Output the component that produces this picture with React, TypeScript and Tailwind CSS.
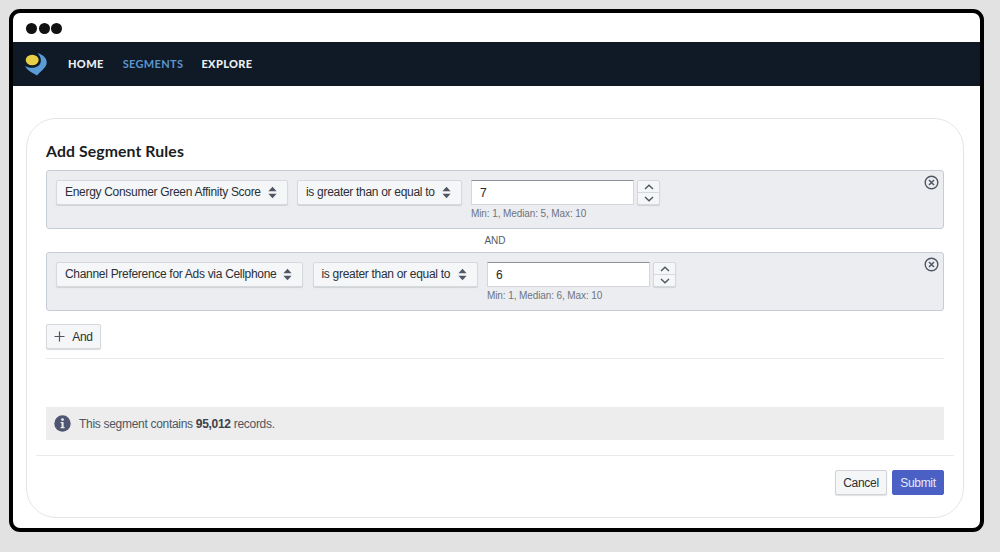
import React from "react";

const sans = "font-['Liberation_Sans',Arial,sans-serif]";
const body = "text-[12px] tracking-[-0.3px]";

function Updown() {
  return (
    <svg width="9" height="13" viewBox="0 0 9 13" className="shrink-0">
      <path d="M4.5 0.8 L8.6 5.2 H0.4 Z" fill="#4f5663" />
      <path d="M4.5 12.2 L8.6 7.8 H0.4 Z" fill="#4f5663" />
    </svg>
  );
}

function Select({ label, w }: { label: string; w: string }) {
  return (
    <div className={`${w} h-[25px] shrink-0 flex items-center justify-between pl-2 pr-[10px] bg-[#f5f6f8] border border-[#d5d8dd] rounded-[2px] shadow-[0_1px_1px_rgba(0,0,0,0.12)] ${body} text-[#2b2f36] whitespace-nowrap`}>
      <span className="-translate-y-px">{label}</span>
      <Updown />
    </div>
  );
}

function Rule({ a, aw, value, hint, gap }: { a: string; aw: string; value: string; hint: string; gap: string }) {
  return (
    <div className="relative h-[59px] border border-[#c6ccd6] rounded-[3px] bg-[#ecedf0] pl-[9px] pt-[9px] flex items-start">
      <Select label={a} w={aw} />
      <div className={`${gap} shrink-0`} />
      <Select label="is greater than or equal to" w="w-[165px]" />
      <div className={`${gap} shrink-0`} />
      <div className="flex flex-col">
        <div className="flex">
          <div className="w-[163px] h-[25px] bg-white border border-[#d3d6da] border-t-[#8d9299] rounded-[1px] pl-2 flex items-center text-[12px] text-[#22262c]">{value}</div>
          <div className="ml-[3px] w-[23px] h-[25px] bg-[#f5f6f8] border border-[#d5d8dd] rounded-[2px] shadow-[0_1px_1px_rgba(0,0,0,0.12)] flex flex-col">
            <div className="h-[12px] flex items-center justify-center border-b border-[#d5d8dd]">
              <svg width="10" height="6" viewBox="0 0 10 6" fill="none"><path d="M1 5 L5 1.2 L9 5" stroke="#4f5663" strokeWidth="1.4" /></svg>
            </div>
            <div className="flex-1 flex items-center justify-center">
              <svg width="10" height="6" viewBox="0 0 10 6" fill="none"><path d="M1 1 L5 4.8 L9 1" stroke="#4f5663" strokeWidth="1.4" /></svg>
            </div>
          </div>
        </div>
        <div className="mt-[3px] text-[10px] tracking-[-0.1px] leading-[12px] text-[#6d7480] whitespace-nowrap">{hint}</div>
      </div>
      <svg width="15" height="15" viewBox="0 0 15 15" fill="none" className="absolute right-[4.5px] top-[4px]">
        <circle cx="7.5" cy="7.5" r="6.3" stroke="#4f5663" strokeWidth="1.4" />
        <path d="M5 5 L10 10 M10 5 L5 10" stroke="#4f5663" strokeWidth="1.5" />
      </svg>
    </div>
  );
}

export default function App() {
  return (
    <div className={`w-[1000px] h-[552px] bg-[#e2e2e2] pt-[9px] pl-[9px] overflow-hidden ${sans}`}>
      <div className="w-[975px] h-[523px] border-[4px] border-black rounded-[11px] bg-white flex flex-col overflow-hidden">
        <div className="h-[29px] shrink-0 flex items-center pl-[13px] pt-[1px] gap-[1.5px]">
          <span className="w-[11px] h-[11px] rounded-full bg-[#111]" />
          <span className="w-[11px] h-[11px] rounded-full bg-[#111]" />
          <span className="w-[11px] h-[11px] rounded-full bg-[#111]" />
        </div>
        <div className="h-[44px] shrink-0 bg-[#0f1a26] flex items-center pl-[11px] font-['Lato',sans-serif] text-[11px] tracking-[0.35px]">
          <svg width="23" height="23" viewBox="0 0 23 23">
            <path d="M13.5 0.2 C19.5 1.5 23 5.5 22.7 10 C22.3 15 17 17.5 13 22.5 C8.5 20 3 17.5 1 13 C5 15.5 11 15.5 14.8 12.5 C18 9.5 17.5 4 13.5 0.2 Z" fill="#5b9bd5" />
            <ellipse cx="8.2" cy="7" rx="6.5" ry="5.2" fill="#e8cf45" />
          </svg>
          <span className="ml-[21px] font-black text-[#eceff2]">HOME</span>
          <span className="ml-[19px] font-bold text-[#5b95cf]">SEGMENTS</span>
          <span className="ml-[18px] font-black text-[#eceff2]">EXPLORE</span>
        </div>
        <div className="pt-[32px] pl-[13px]">
          <div className="w-[938px] h-[400px] border border-[#e2e5e8] rounded-[30px] pt-[24px] flex flex-col">
            <div className="px-[19px]">
              <h1 className="font-['Lato',sans-serif] font-bold text-[15.8px] leading-[18px] text-[#1a1d22] tracking-[0.1px] mb-[9px] -translate-y-px">Add Segment Rules</h1>
              <Rule a="Energy Consumer Green Affinity Score" aw="w-[232px]" value="7" hint="Min: 1, Median: 5, Max: 10" gap="w-[9px]" />
              <div className="h-[23px] flex items-center justify-center text-[10px] text-[#555b65]">AND</div>
              <Rule a="Channel Preference for Ads via Cellphone" aw="w-[247px]" value="6" hint="Min: 1, Median: 6, Max: 10" gap="w-[9.5px]" />
              <button className={`mt-[13px] w-[55px] h-[25px] flex items-center justify-center gap-[7px] bg-[#f5f6f8] border border-[#d5d8dd] rounded-[2px] shadow-[0_1px_1px_rgba(0,0,0,0.15)] ${body} text-[#2b2f36]`}>
                <svg width="11" height="11" viewBox="0 0 11 11" fill="none"><path d="M5.5 0.5 V10.5 M0.5 5.5 H10.5" stroke="#4f5663" strokeWidth="1.2" /></svg>
                And
              </button>
              <div className="mt-[9px] border-t border-[#e6ebf0]" />
              <div className={`mt-[48px] h-[33px] bg-[#ededee] flex items-center pl-[8px] ${body} text-[#50565f]`}>
                <svg width="17" height="17" viewBox="0 0 17 17" className="mr-[8px]">
                  <circle cx="8.5" cy="8.5" r="8.2" fill="#4f5670" />
                  <circle cx="8.5" cy="4.6" r="1.4" fill="#ededee" />
                  <path d="M6.6 7 H9.6 V12 H10.6 V13.2 H6.6 V12 H7.6 V8.2 H6.6 Z" fill="#ededee" />
                </svg>
                <span>This segment contains <b className="text-[#3d4249]">95,012</b> records.</span>
              </div>
            </div>
            <div className="mt-[15px] mx-[9px] border-t border-[#e9ebee]" />
            <div className="mt-[14px] px-[19px] flex justify-end gap-[5px]">
              <button className={`w-[52px] h-[25px] bg-[#f5f6f8] border border-[#d0d3d8] rounded-[2px] shadow-[0_1px_1px_rgba(0,0,0,0.12)] ${body} text-[#2b2f36]`}>Cancel</button>
              <button className={`w-[52px] h-[25px] bg-[#4a60c4] border border-[#4a60c4] rounded-[2px] ${body} text-[#e6e9f7]`}>Submit</button>
            </div>
          </div>
        </div>
      </div>
    </div>
  );
}
